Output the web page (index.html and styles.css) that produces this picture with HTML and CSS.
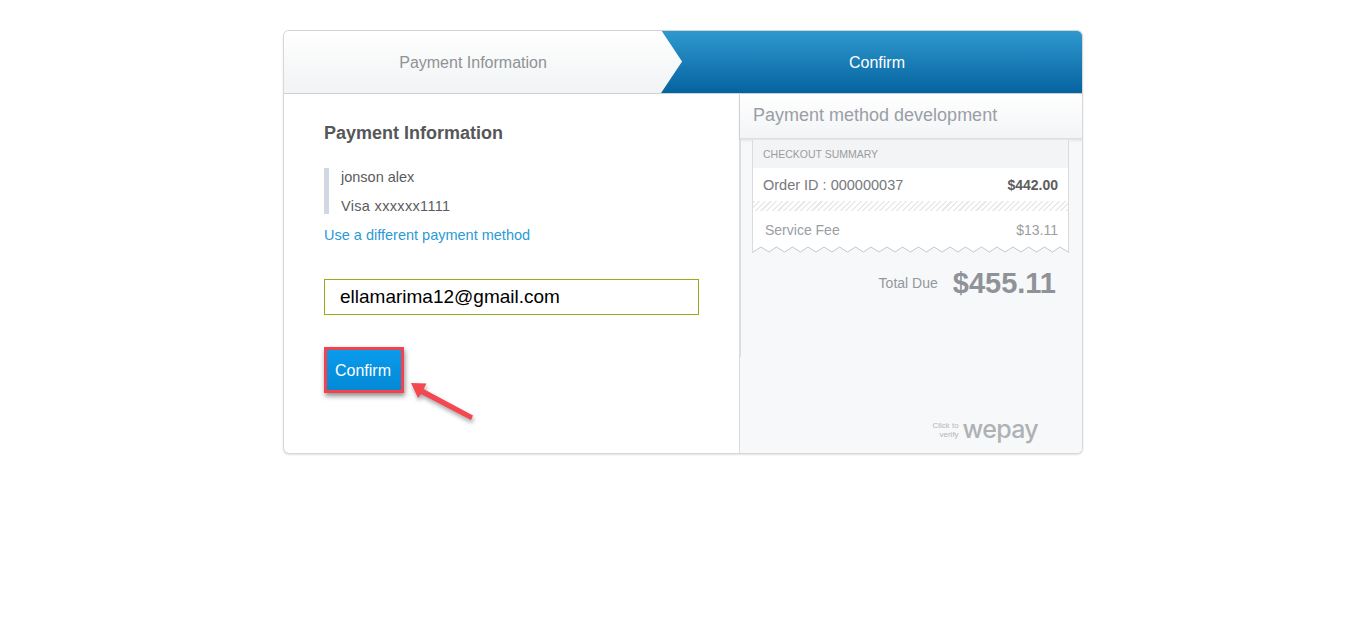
FILE: index.html
```html
<!DOCTYPE html>
<html lang="en">
<head>
<meta charset="utf-8">
<title>Confirm payment</title>
<link rel="stylesheet" href="styles.css">
</head>
<body>
<main class="card">
  <header class="steps">
    <div class="step step-done">Payment Information</div>
    <div class="step step-active">Confirm</div>
  </header>
  <div class="content">
    <section class="details">
      <h2 class="details-title">Payment Information</h2>
      <div class="payer">
        <p class="payer-line">jonson alex</p>
        <p class="payer-line payer-card">Visa xxxxxx1111</p>
      </div>
      <a class="change-link" href="#">Use a different payment method</a>
      <div class="email-field">ellamarima12@gmail.com</div>
      <div class="action">
        <button class="confirm-btn" type="button">Confirm</button>
        <svg class="arrow" width="76" height="50" viewBox="0 0 76 50" aria-hidden="true">
          <path d="M3 4 L18.500 4.500 L15.500 10 L65 36.500 L63 41 L13 15 L10 19 Z" fill="#f4474f"/>
        </svg>
      </div>
    </section>
    <aside class="summary">
      <h3 class="summary-title">Payment method development</h3>
      <div class="summary-body">
        <div class="receipt">
          <div class="receipt-head">CHECKOUT SUMMARY</div>
          <div class="order-row"><span>Order ID : 000000037</span><strong class="order-amount">$442.00</strong></div>
          <div class="hatch"></div>
          <div class="fee-row"><span>Service Fee</span><span>$13.11</span></div>
          <svg class="zigzag" width="315" height="8" aria-hidden="true">
            <path d="M0 0 H315 V7 L307 2 L299.500 7 L291.500 2 L283.500 7 L275.500 2 L268 7 L260 2 L252 7 L244 2 L236.500 7 L228.500 2 L220.500 7 L212.500 2 L205 7 L197 2 L189 7 L181 2 L173.500 7 L165.500 2 L157.500 7 L149.500 2 L142 7 L134 2 L126 7 L118 2 L110.500 7 L102.500 2 L94.500 7 L86.500 2 L79 7 L71 2 L63 7 L55 2 L47.500 7 L39.500 2 L31.500 7 L23.500 2 L16 7 L8 2 L0 7 Z" fill="#fff" stroke="none"/>
            <path d="M0 7 L8 2 L16 7 L23.500 2 L31.500 7 L39.500 2 L47.500 7 L55 2 L63 7 L71 2 L79 7 L86.500 2 L94.500 7 L102.500 2 L110.500 7 L118 2 L126 7 L134 2 L142 7 L149.500 2 L157.500 7 L165.500 2 L173.500 7 L181 2 L189 7 L197 2 L205 7 L212.500 2 L220.500 7 L228.500 2 L236.500 7 L244 2 L252 7 L260 2 L268 7 L275.500 2 L283.500 7 L291.500 2 L299.500 7 L307 2 L315 7" fill="none" stroke="#c4c7cb" stroke-width="1"/>
          </svg>
        </div>
        <div class="total"><span class="total-label">Total Due</span><span class="total-value">$455.11</span></div>
      </div>
      <div class="brand">
        <span class="brand-note">Click to<br>verify</span>
        <span class="brand-logo">wepay</span>
      </div>
    </aside>
  </div>
</main>
</body>
</html>
```
FILE: styles.css
```css
* { box-sizing: border-box; }
html, body { margin: 0; padding: 0; background: #fff; }
body {
  padding-top: 30px;
  height: 638px;
  overflow: hidden;
  font-family: "Liberation Sans", Arial, sans-serif;
}
.card {
  width: 800px;
  height: 424px;
  margin-left: 283px;
  border: 1px solid #d6d8da;
  border-top-color: #d0d2d4;
  border-radius: 6px;
  box-shadow: 0 1px 2px rgba(0, 0, 0, .12);
  display: flex;
  flex-direction: column;
  overflow: hidden;
  background: #fff;
}
.steps {
  display: flex;
  height: 64px;
  margin: -1px -1px 0 0;
  flex: none;
  background: linear-gradient(#fff, #f1f3f4);
  border-bottom: 1px solid #cfd1d3;
}
.step {
  display: flex;
  align-items: center;
  justify-content: center;
  font-size: 16px;
}
.step-done { width: 378px; color: #8f9296; padding: 3px 0 0 1px; }
.step-active {
  width: 423px;
  height: 63px;
  padding: 3px 0 0 10px;
  color: #fff;
  background: linear-gradient(#3099cf, #05639f);
  clip-path: polygon(0 0, 100% 0, 100% 100%, 0 100%, 21px 50%);
}
.content { flex: 1; display: flex; min-height: 0; }
.details { width: 455px; flex: none; padding: 27px 0 0 40px; }
.details-title {
  margin: 0 0 24px;
  font-size: 18px;
  line-height: 24px;
  font-weight: bold;
  color: #565759;
}
.payer {
  border-left: 5px solid #d1d8e1;
  padding-left: 12px;
  height: 46px;
  margin-bottom: 11px;
  margin-top: -1px;
}
.payer-line {
  margin: 0 0 8px;
  font-size: 14.500px;
  line-height: 21px;
  color: #5a5b5e;
  position: relative;
  top: -1px;
}
.payer-card { letter-spacing: .33px; }
.change-link {
  display: block;
  font-size: 14.500px;
  line-height: 21px;
  color: #2a9ad6;
  text-decoration: none;
}
.email-field {
  width: 375px;
  height: 36px;
  margin-top: 33px;
  padding-left: 15px;
  border: 1px solid #8fb01b;
  font-size: 19px;
  line-height: 34px;
  color: #000;
}
.action { position: relative; margin-top: 32px; height: 46px; }
.confirm-btn {
  width: 80px;
  height: 46px;
  padding: 2px 2px 0 0;
  border: 3px solid #f2434c;
  background: linear-gradient(#0a9bec, #0389d6);
  color: #fff;
  font-family: inherit;
  font-size: 16px;
  box-shadow: 1px 3px 5px rgba(0, 0, 0, .45);
}
.arrow {
  position: absolute;
  left: 84px;
  top: 32px;
  filter: drop-shadow(1px 3px 2px rgba(0, 0, 0, .35));
}
.summary {
  flex: 1;
  display: flex;
  flex-direction: column;
  background: #f7f8fa;
  border-left: 1px solid #d9dbde;
}
.summary-title {
  flex: none;
  height: 45px;
  margin: 0;
  padding-left: 13px;
  font-size: 18px;
  font-weight: normal;
  line-height: 42px;
  color: #9a9ea6;
  background: linear-gradient(#fff, #f2f4f6);
  border-bottom: 1px solid #dcdee1;
  box-shadow: 0 1px 3px rgba(0, 0, 0, .12);
}
.summary-body {
  flex: none;
  height: 218px;
  padding: 1px 13px 0 12px;
  border-right: 1px solid #dcdee1;
  border-left: 1px solid #dcdee1;
  margin-right: 1px;
}
.receipt {
  width: 317px;
  margin-left: -1px;
  border-left: 1px solid #d9dbde;
  border-right: 1px solid #d9dbde;
  background: #fff;
}
.receipt-head {
  height: 28px;
  padding-left: 10px;
  font-size: 10.500px;
  line-height: 28px;
  color: #9a9ca0;
  background: #f3f4f6;
}
.order-row {
  height: 33px;
  padding: 0 10px;
  display: flex;
  justify-content: space-between;
  align-items: center;
  font-size: 14.500px;
  color: #77797d;
}
.order-amount { font-size: 14px; color: #5c5d60; }
.hatch {
  height: 10px;
  background: repeating-linear-gradient(135deg, #e9eaec 0 1.500px, #fff 1.500px 4px);
}
.fee-row {
  height: 35px;
  padding: 2px 10px 0 12px;
  display: flex;
  justify-content: space-between;
  align-items: center;
  font-size: 14px;
  color: #9a9da2;
}
.zigzag { display: block; background: #f7f8fa; margin-top: -1px; }
.total {
  display: flex;
  justify-content: flex-end;
  align-items: center;
  gap: 15px;
  height: 42px;
  padding-right: 13px;
  margin-top: 9px;
}
.total-label { font-size: 14px; color: #94979c; }
.total-value { font-size: 29px; font-weight: bold; color: #8f9297; }
.brand {
  margin-top: auto;
  height: 52px;
  padding: 12px 46px 0 0;
  display: flex;
  justify-content: flex-end;
  align-items: flex-start;
  gap: 4px;
}
.brand-note {
  font-size: 8px;
  line-height: 9px;
  text-align: right;
  color: #b3b6b8;
  margin-top: 8px;
}
.brand-logo {
  font-family: Inter, "Liberation Sans", sans-serif;
  font-size: 25px;
  font-weight: 500;
  line-height: 28px;
  letter-spacing: -.7px;
  color: #aeb2b4;
  margin-top: 2px;
}
```
